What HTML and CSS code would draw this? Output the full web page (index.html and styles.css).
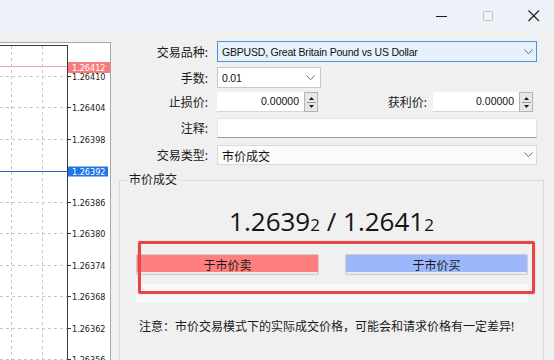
FILE: index.html
```html
<!DOCTYPE html>
<html lang="zh-CN">
<head>
<meta charset="utf-8">
<title>订单</title>
<link rel="stylesheet" href="styles.css">
</head>
<body>
<div class="titlebar">
  <span class="ctl"><svg width="12" height="12" viewBox="0 0 12 12"><line x1="0" y1="6.5" x2="11" y2="6.5" stroke="#1b1b1b" stroke-width="1"/></svg></span>
  <span class="ctl"><svg width="12" height="12" viewBox="0 0 12 12"><rect x="1.5" y="1.5" width="9" height="9" rx="1" fill="none" stroke="#c4c4c4" stroke-width="1"/></svg></span>
  <span class="ctl"><svg width="12" height="12" viewBox="0 0 12 12"><path d="M0.5 0.5 L11 11 M11 0.5 L0.5 11" stroke="#1b1b1b" stroke-width="1.1"/></svg></span>
</div>
<div class="main">
  <div class="chart">
    <svg class="chart-svg" width="110" height="317" viewBox="0 0 110 317">
      <g stroke="#c6c6c6" stroke-width="1" stroke-dasharray="3 3">
        <line x1="11.5" y1="3" x2="11.5" y2="317"/>
        <line x1="42.5" y1="3" x2="42.5" y2="317"/>
        <line x1="0" y1="33.5" x2="67" y2="33.5"/>
        <line x1="0" y1="64.5" x2="67" y2="64.5"/>
        <line x1="0" y1="96.5" x2="67" y2="96.5"/>
        <line x1="0" y1="159.5" x2="67" y2="159.5"/>
        <line x1="0" y1="190.5" x2="67" y2="190.5"/>
        <line x1="0" y1="222.5" x2="67" y2="222.5"/>
        <line x1="0" y1="253.5" x2="67" y2="253.5"/>
        <line x1="0" y1="285.5" x2="67" y2="285.5"/>
        <line x1="0" y1="316.5" x2="67" y2="316.5"/>
      </g>
      <g stroke="#3a3a3a" stroke-width="1">
        <line x1="0" y1="2.5" x2="68" y2="2.5"/>
        <line x1="67.5" y1="2" x2="67.5" y2="317"/>
        <line x1="67" y1="33.5" x2="71" y2="33.5"/>
        <line x1="67" y1="64.5" x2="71" y2="64.5"/>
        <line x1="67" y1="96.5" x2="71" y2="96.5"/>
        <line x1="67" y1="159.5" x2="71" y2="159.5"/>
        <line x1="67" y1="190.5" x2="71" y2="190.5"/>
        <line x1="67" y1="222.5" x2="71" y2="222.5"/>
        <line x1="67" y1="253.5" x2="71" y2="253.5"/>
        <line x1="67" y1="285.5" x2="71" y2="285.5"/>
        <line x1="67" y1="316.5" x2="71" y2="316.5"/>
      </g>
      <g class="axis-text">
        <text x="72" y="37">1.26410</text>
        <text x="72" y="68">1.26404</text>
        <text x="72" y="100">1.26398</text>
        <text x="72" y="163">1.26386</text>
        <text x="72" y="194">1.26380</text>
        <text x="72" y="226">1.26374</text>
        <text x="72" y="257">1.26368</text>
        <text x="72" y="289">1.26362</text>
        <text x="72" y="320">1.26356</text>
      </g>
      <line x1="0" y1="23.5" x2="67" y2="23.5" stroke="#f4a3a3" stroke-width="1"/>
      <rect x="68" y="19" width="42" height="11" fill="#f77b7b"/>
      <text class="axis-tag" x="72" y="27.6">1.26412</text>
      <line x1="0" y1="128.5" x2="67" y2="128.5" stroke="#2b5fb8" stroke-width="1"/>
      <rect x="68" y="123.5" width="40" height="10" fill="#1f74e8"/>
      <text class="axis-tag" x="72" y="131.6">1.26392</text>
    </svg>
  </div>

  <div class="form">
    <div class="row r1">
      <span class="lbl">交易品种:</span>
      <div class="select focus wide"><span class="val">GBPUSD, Great Britain Pound vs US Dollar</span><svg class="chev" width="10" height="6" viewBox="0 0 10 6"><polyline points="0.5,0.5 4.5,4.8 8.5,0.5" fill="none" stroke="#707070" stroke-width="1"/></svg></div>
    </div>
    <div class="row r2">
      <span class="lbl">手数:</span>
      <div class="select lots"><span class="val">0.01</span><svg class="chev" width="10" height="6" viewBox="0 0 10 6"><polyline points="0.5,0.5 4.5,4.8 8.5,0.5" fill="none" stroke="#707070" stroke-width="1"/></svg></div>
    </div>
    <div class="row r3">
      <span class="lbl">止损价:</span>
      <div class="num sl"><span class="field">0.00000</span><span class="spin"><svg width="11" height="18" viewBox="0 0 11 18"><path d="M3 7 L8 7 L5.5 4 Z" fill="#1a1a1a"/><line x1="1" y1="9.5" x2="10" y2="9.5" stroke="#9a9a9a"/><path d="M3 12 L8 12 L5.5 15 Z" fill="#1a1a1a"/></svg></span></div>
      <span class="lbl2">获利价:</span>
      <div class="num tp"><span class="field">0.00000</span><span class="spin"><svg width="11" height="18" viewBox="0 0 11 18"><path d="M3 7 L8 7 L5.5 4 Z" fill="#1a1a1a"/><line x1="1" y1="9.5" x2="10" y2="9.5" stroke="#9a9a9a"/><path d="M3 12 L8 12 L5.5 15 Z" fill="#1a1a1a"/></svg></span></div>
    </div>
    <div class="row r4">
      <span class="lbl">注释:</span>
      <div class="text wide"></div>
    </div>
    <div class="row r5">
      <span class="lbl">交易类型:</span>
      <div class="select plain wide"><span class="val">市价成交</span><svg class="chev" width="10" height="6" viewBox="0 0 10 6"><polyline points="0.5,0.5 4.5,4.8 8.5,0.5" fill="none" stroke="#707070" stroke-width="1"/></svg></div>
    </div>

    <fieldset class="group">
      <legend>市价成交</legend>
      <div class="price">1.2639<small>2</small> / 1.2641<small>2</small></div>
      <div class="trade">
        <div class="buttons">
          <button class="btn sell">于市价卖</button>
          <button class="btn buy">于市价买</button>
        </div>
        <div class="strip"></div>
        <div class="annot"></div>
      </div>
      <p class="note">注意：市价交易模式下的实际成交价格，可能会和请求价格有一定差异!</p>
    </fieldset>
  </div>
</div>
</body>
</html>
```
FILE: styles.css
```css
* { box-sizing: border-box; }
html, body { margin: 0; }
body {
  width: 554px;
  height: 360px;
  overflow: hidden;
  background: #f0f0f0;
  font-family: "Noto Sans", "Noto Sans CJK SC", sans-serif;
  font-size: 12px;
  color: #1a1a1a;
}

.titlebar {
  height: 31px;
  background: #eef2f8;
  display: flex;
  justify-content: flex-end;
  align-items: center;
  padding-right: 14px;
}
.ctl { width: 12px; height: 12px; display: block; }
.ctl svg { display: block; }
.ctl + .ctl { margin-left: 34px; }

.main { display: flex; height: 329px; }

.chart {
  flex: none;
  width: 111px;
  height: 318px;
  margin-top: 11px;
  background: #fff;
  border-top: 1px solid #a8a8a8;
  border-right: 1px solid #a8a8a8;
}
.chart-svg { display: block; }
.axis-text, .axis-tag {
  font-family: "DejaVu Sans Condensed", "DejaVu Sans", sans-serif;
  font-stretch: condensed;
  font-size: 9px;
}
.axis-text { fill: #1a1a1a; }
.axis-tag { fill: #fff; }

.form { flex: 1; padding-top: 10px; }

.row { display: flex; align-items: center; width: 426px; }
.r1 { height: 21px; margin-bottom: 5px; }
.r2 { height: 21px; margin-bottom: 4px; }
.r3 { height: 20px; margin-bottom: 6px; }
.r4 { height: 20px; margin-bottom: 7px; }
.r5 { height: 20px; }

.lbl {
  flex: none;
  width: 97px;
  margin-right: 9px;
  text-align: right;
  white-space: nowrap;
}
.lbl2 {
  flex: 1;
  text-align: right;
  margin-right: 6px;
  white-space: nowrap;
}

.select {
  height: 100%;
  display: flex;
  align-items: center;
  justify-content: space-between;
  padding: 0 2px 0 4px;
  border: 1px solid #c9c9c9;
  background: #fff;
}
.select .val {
  white-space: nowrap;
  font-family: "Liberation Sans", "Noto Sans", sans-serif;
  font-size: 10.5px;
  letter-spacing: -0.2px;
  color: #111;
}
.chev { flex: none; display: block; }
.wide { width: 320px; }
.select.focus { border-color: #4a94dc; background: #e6f1fb; }
.select.plain { background: #fbfbfb; border-color: #dadada; }
.select.plain .val { font-family: "Noto Sans CJK SC", sans-serif; font-size: 12px; letter-spacing: 0; }
.lots { width: 104px; padding-right: 4px; }

.num { display: flex; height: 100%; }
.num .field {
  flex: 1;
  background: #fff;
  border-bottom: 1px solid #d6d6d6;
  text-align: right;
  padding-right: 5px;
  line-height: 19px;
  font-family: "Liberation Sans", "Noto Sans", sans-serif;
  font-size: 10.5px;
  color: #111;
}
.num .spin {
  flex: none;
  width: 14px;
  background: #e7e7e7;
  border: 1px solid #b5b5b5;
  display: flex;
  align-items: center;
  justify-content: center;
}
.num .spin svg { display: block; }
.sl { width: 101px; }
.tp { width: 100px; margin-right: 4px; }

.text {
  height: 100%;
  background: #fff;
  border: 1px solid #e3e3e3;
  border-bottom-color: #9d9d9d;
}

.group {
  margin: 7px 0 0 8px;
  width: 425px;
  height: 200px;
  padding: 0;
  border: 1px solid #dadada;
  min-width: 0;
}
.group legend {
  margin-left: 7px;
  padding: 0 2px;
  line-height: 16px;
  font-size: 12px;
}

.price {
  margin-top: 18px;
  height: 30px;
  line-height: 30px;
  text-align: center;
  font-family: "Open Sans", "Noto Sans", sans-serif;
  font-size: 26px;
  color: #141414;
}
.price small { font-size: 17px; }

.trade {
  position: relative;
  margin: 18px 0 0 16px;
  width: 392px;
}
.buttons { display: flex; gap: 26px; }
.btn {
  flex: 1;
  height: 21px;
  padding: 0;
  border: 1px solid #cdcdcd;
  border-radius: 2px;
  font-family: "Noto Sans CJK SC", sans-serif;
  font-size: 12px;
  color: #1a1a1a;
  line-height: 17px;
  box-shadow: inset 0 -2px 0 #ececec;
}
.sell { background: #ff7f7f; }
.buy { background: #9db8fa; }
.strip {
  margin-top: 9px;
  height: 19px;
  background: #f8f8f8;
  border-radius: 3px;
}
.annot {
  position: absolute;
  left: 2px;
  top: -13px;
  width: 397px;
  height: 53px;
  border: 3px solid #e64646;
  border-radius: 2px;
  box-shadow: 0 0 1px rgba(230, 70, 70, 0.6);
}

.note {
  margin: 15px 0 0 19px;
  line-height: 18px;
  font-size: 12px;
  white-space: nowrap;
}
```
